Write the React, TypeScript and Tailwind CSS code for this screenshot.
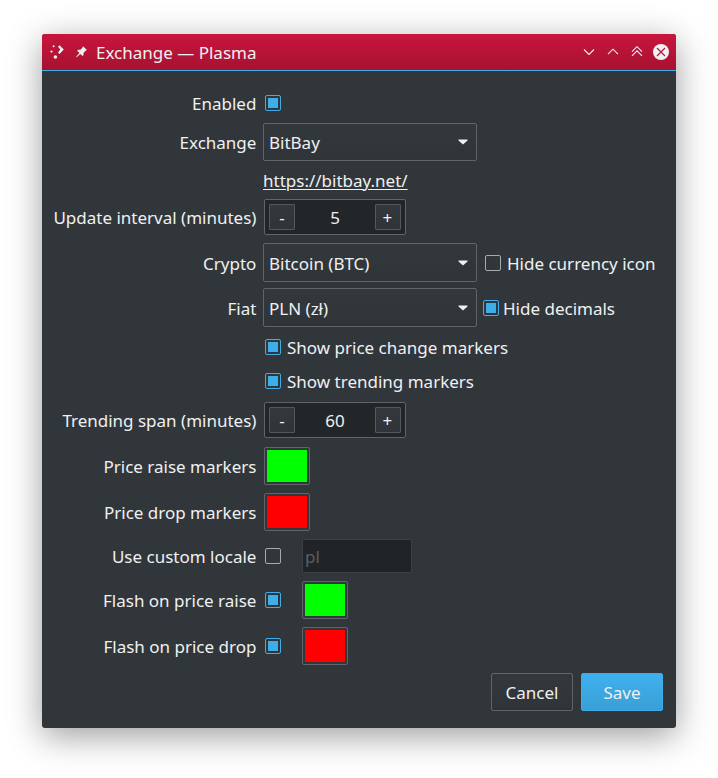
import type { ReactNode } from "react";

function Row({
  label,
  labelClass = "",
  className,
  children,
}: {
  label?: string;
  labelClass?: string;
  className: string;
  children: ReactNode;
}) {
  return (
    <div className={`flex items-center ${className}`}>
      <div className={`flex w-[215px] shrink-0 justify-end pr-[0.6px] whitespace-pre ${labelClass}`}>{label}</div>
      {children}
    </div>
  );
}

function Check({ on, className }: { on?: boolean; className: string }) {
  return (
    <span
      className={`flex size-4 shrink-0 items-center justify-center rounded-[2px] border ${on ? "border-[#3daee9]" : "border-[#a8abad]"} ${className}`}
    >
      {on && <span className="size-[10px] bg-[#3daee9]" />}
    </span>
  );
}

function Combo({ value, className, textClass = "" }: { value: string; className: string; textClass?: string }) {
  return (
    <div
      className={`ml-[6px] flex w-[214px] items-center justify-between rounded-[2px] border border-[#616569] bg-linear-to-b from-[#33383c] to-[#2f3438] pr-2 pl-[5px] ${className}`}
    >
      <span className={textClass}>{value}</span>
      <svg width="10" height="6" viewBox="0 0 10 6">
        <path d="M.5 .5h9v1L5 5.500.500 1.500z" fill="#eff0f1" />
      </svg>
    </div>
  );
}

function Spin({ value }: { value: string }) {
  const button =
    "flex size-[26px] items-center justify-center rounded-[1px] border border-[#54585b] bg-linear-to-b from-[#33383c] to-[#2f3438]";
  return (
    <div className="ml-[7px] flex h-9 w-[142px] items-center justify-between rounded-[2px] border border-[#616569] bg-[#232629] px-1">
      <span className={button}>-</span>
      <span>{value}</span>
      <span className={`${button} pr-px`}>+</span>
    </div>
  );
}

function Swatch({ color, className }: { color: string; className: string }) {
  return (
    <div className={`h-[38px] w-[46px] rounded-[2px] border border-[#616569] p-[2px] ${className}`}>
      <div className={`h-full w-full ${color}`} />
    </div>
  );
}

export default function App() {
  return (
    <div className="h-[778px] w-[718px] overflow-hidden bg-white px-[42px] pt-[34px] font-['Noto_Sans',sans-serif] text-[17px] leading-[23px] text-[#eff0f1]">
      <div className="flex h-[694px] w-[634px] flex-col overflow-hidden rounded-[3px] bg-[#31363b] shadow-[0_8px_34px_rgba(0,0,0,0.39)]">
        <header className="flex h-[37px] shrink-0 items-center border-b border-[#3daee9] bg-linear-to-b from-[#c9153d] to-[#a61230] pl-2">
          <svg width="16" height="16" viewBox="0 0 16 16" className="shrink-0" fill="#eff0f1">
            <circle cx="3.6" cy="2.2" r="1" />
            <circle cx="1.5" cy="7.6" r="1.1" />
            <circle cx="5.4" cy="13" r="1.8" />
            <path d="M8 2.800 9.500 1.300 13.800 5.600 9.500 9.900 8 8.400 10.300 5.600z" />
          </svg>
          <svg width="16" height="16" viewBox="0 0 16 16" className="ml-2 shrink-0" fill="#eff0f1">
            <path d="M9 2.300 12.900 6.100 11.600 6.700 9.500 8.900V11.100L8.500 12 6.300 9.900 2.900 13 2.100 13.200 2.300 12.400 5.400 8.900 3.200 6.700 4.200 5.700 6.400 5.800 8.400 3.700z" />
          </svg>
          <span className="ml-[6px] whitespace-pre">Exchange — Plasma</span>
          <svg width="92" height="20" viewBox="0 0 92 20" className="ml-auto mr-[4px]" fill="none" stroke="#eff0f1" strokeWidth="1.1">
            <path d="M4 7.500 9 12.500 14 7.500M28 12.200 33 7.200 38 12.200M52 9.700 57 4.700 62 9.700M52 13.900 57 8.900 62 13.900" />
            <circle cx="81" cy="10" r="8" fill="#eff0f1" stroke="none" />
            <path d="m77 6 8 8m0-8-8 8" stroke="#b51335" />
          </svg>
        </header>

        <main className="flex flex-1 flex-col">
          <Row label="Enabled" className="mt-5 h-6">
            <Check on className="ml-2" />
          </Row>
          <Row label="Exchange" className="mt-2 h-[38px]">
            <Combo value="BitBay" className="h-[38px]" />
          </Row>
          <Row className="mt-2 h-[22px]">
            <a className="ml-[6px] underline decoration-1 underline-offset-2">https://bitbay.net/</a>
          </Row>
          <Row label="Update interval (minutes)" className="mt-2 h-9">
            <Spin value="5" />
          </Row>
          <Row label="Crypto" labelClass="pt-[2px]" className="mt-2 h-[39px]">
            <Combo value="Bitcoin (BTC)" className="h-[39px]" textClass="pt-[2px]" />
            <Check className="ml-2" />
            <span className="ml-[6px] pt-[2px]">Hide currency icon</span>
          </Row>
          <Row label="Fiat" labelClass="pt-[2px]" className="mt-[6px] h-[39px]">
            <Combo value="PLN (zł)" className="h-[39px]" textClass="pt-[2px]" />
            <Check on className="ml-[6px]" />
            <span className="ml-1 pt-[2px]">Hide decimals</span>
          </Row>
          <Row className="mt-2 h-[25px]">
            <Check on className="mb-[2px] ml-2" />
            <span className="ml-[6px]">Show price change markers</span>
          </Row>
          <Row className="mt-[9px] h-[25px]">
            <Check on className="mb-[2px] ml-2" />
            <span className="ml-[6px]">Show trending markers</span>
          </Row>
          <Row label="Trending span (minutes)" className="mt-2 h-9">
            <Spin value="60" />
          </Row>
          <Row label="Price raise markers" className="mt-[9px] h-[38px]">
            <Swatch color="bg-[#00ff00]" className="ml-[7px]" />
          </Row>
          <Row label="Price drop markers" className="mt-2 h-[38px]">
            <Swatch color="bg-[#ff0000]" className="ml-[7px]" />
          </Row>
          <Row label="Use custom locale" className="mt-2 h-[34px]">
            <Check className="ml-2" />
            <div className="ml-[21px] flex h-[34px] w-[110px] items-center rounded-[2px] border border-[#3b4044] bg-[#212427] pl-[2px] text-[#5b5e63]">
              pl
            </div>
          </Row>
          <Row label="Flash on price raise" className="mt-2 h-[38px]">
            <Check on className="ml-2" />
            <Swatch color="bg-[#00ff00]" className="ml-[21px]" />
          </Row>
          <Row label="Flash on price drop" className="mt-2 h-[38px]">
            <Check on className="ml-2" />
            <Swatch color="bg-[#ff0000]" className="ml-[21px]" />
          </Row>
          <div className="mt-2 flex justify-end gap-2 pr-[13px]">
            <button className="h-[38px] w-[82px] rounded-[2px] border border-[#616569] bg-linear-to-b from-[#33383c] to-[#2f3438]">
              Cancel
            </button>
            <button className="h-[38px] w-[82px] rounded-[2px] border border-[#3daee9] bg-linear-to-b from-[#3fb1ef] to-[#3a9fd5]">
              Save
            </button>
          </div>
        </main>
      </div>
    </div>
  );
}
